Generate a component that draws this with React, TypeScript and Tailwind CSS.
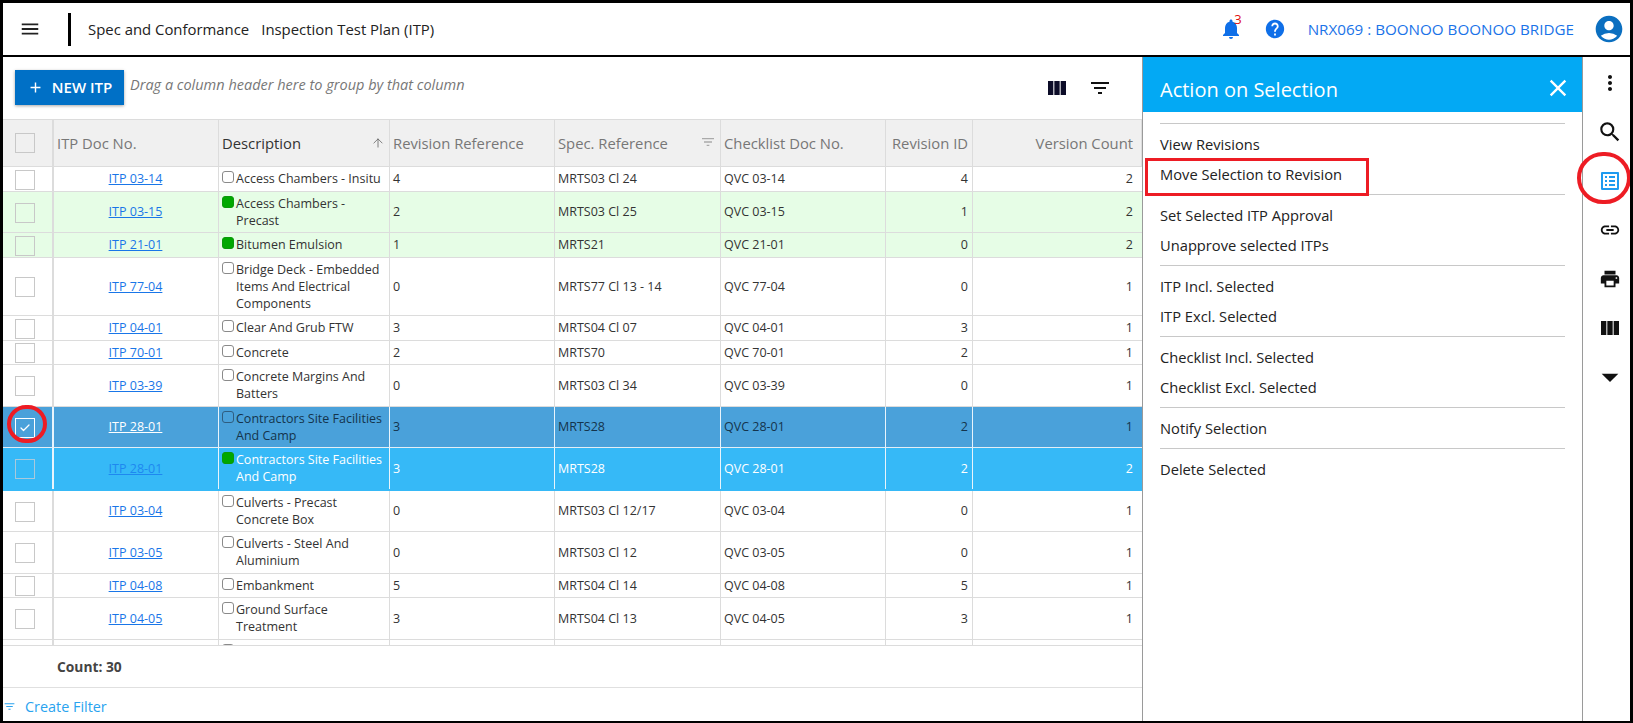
import { ArrowUp, Check } from "lucide-react";
import {
  MdAccountCircle,
  MdAdd,
  MdArrowDropDown,
  MdClose,
  MdFilterList,
  MdHelp,
  MdLink,
  MdListAlt,
  MdMenu,
  MdMoreVert,
  MdNotifications,
  MdPrint,
  MdSearch,
  MdViewColumn,
} from "react-icons/md";

type Row = {
  doc: string;
  desc: string;
  rev: string;
  spec: string;
  checklist: string;
  revId: string;
  versions: string;
  tone?: "green" | "selected" | "active";
  approved?: boolean;
};

const rows: Row[] = [
  { doc: "ITP 03-14", desc: "Access Chambers - Insitu", rev: "4", spec: "MRTS03 Cl 24", checklist: "QVC 03-14", revId: "4", versions: "2" },
  { doc: "ITP 03-15", desc: "Access Chambers - Precast", rev: "2", spec: "MRTS03 Cl 25", checklist: "QVC 03-15", revId: "1", versions: "2", tone: "green", approved: true },
  { doc: "ITP 21-01", desc: "Bitumen Emulsion", rev: "1", spec: "MRTS21", checklist: "QVC 21-01", revId: "0", versions: "2", tone: "green", approved: true },
  { doc: "ITP 77-04", desc: "Bridge Deck - Embedded Items And Electrical Components", rev: "0", spec: "MRTS77 Cl 13 - 14", checklist: "QVC 77-04", revId: "0", versions: "1" },
  { doc: "ITP 04-01", desc: "Clear And Grub FTW", rev: "3", spec: "MRTS04 Cl 07", checklist: "QVC 04-01", revId: "3", versions: "1" },
  { doc: "ITP 70-01", desc: "Concrete", rev: "2", spec: "MRTS70", checklist: "QVC 70-01", revId: "2", versions: "1" },
  { doc: "ITP 03-39", desc: "Concrete Margins And Batters", rev: "0", spec: "MRTS03 Cl 34", checklist: "QVC 03-39", revId: "0", versions: "1" },
  { doc: "ITP 28-01", desc: "Contractors Site Facilities And Camp", rev: "3", spec: "MRTS28", checklist: "QVC 28-01", revId: "2", versions: "1", tone: "selected" },
  { doc: "ITP 28-01", desc: "Contractors Site Facilities And Camp", rev: "3", spec: "MRTS28", checklist: "QVC 28-01", revId: "2", versions: "2", tone: "active", approved: true },
  { doc: "ITP 03-04", desc: "Culverts - Precast Concrete Box", rev: "0", spec: "MRTS03 Cl 12/17", checklist: "QVC 03-04", revId: "0", versions: "1" },
  { doc: "ITP 03-05", desc: "Culverts - Steel And Aluminium", rev: "0", spec: "MRTS03 Cl 12", checklist: "QVC 03-05", revId: "0", versions: "1" },
  { doc: "ITP 04-08", desc: "Embankment", rev: "5", spec: "MRTS04 Cl 14", checklist: "QVC 04-08", revId: "5", versions: "1" },
  { doc: "ITP 04-05", desc: "Ground Surface Treatment", rev: "3", spec: "MRTS04 Cl 13", checklist: "QVC 04-05", revId: "3", versions: "1" },
];

const menuSections = [
  ["View Revisions", "Move Selection to Revision"],
  ["Set Selected ITP Approval", "Unapprove selected ITPs"],
  ["ITP Incl. Selected", "ITP Excl. Selected"],
  ["Checklist Incl. Selected", "Checklist Excl. Selected"],
  ["Notify Selection"],
  ["Delete Selected"],
];

const gridCols = "grid grid-cols-[51px_165px_171px_165px_166px_165px_87px_169px]";

function HeaderCell({ label, right, dark, last, children }: { label: string; right?: boolean; dark?: boolean; last?: boolean; children?: React.ReactNode }) {
  return (
    <div className={`relative flex items-center border-r border-[#dcdcdc] pl-[3px] text-[14.8px] ${last ? "pr-[8px]" : "pr-[4px]"} ${right ? "justify-end" : ""} ${dark ? "font-medium text-[#333]" : "text-[#777]"}`}>
      {label}
      {children}
    </div>
  );
}

function GridRow({ row }: { row: Row }) {
  const bg =
    row.tone === "green"
      ? "bg-[#e6fde6] border-b border-[#dcdcdc]"
      : row.tone === "selected"
        ? "bg-[#4aa1da] border-b border-[#e4eef6]"
        : row.tone === "active"
          ? "bg-[#36b9f7] border-b-2 border-[#36b9f7]"
          : "bg-white border-b border-[#dcdcdc]";
  const line = row.tone === "selected" || row.tone === "active" ? "border-[#e8f4fc]" : "border-[#dcdcdc]";
  const text = row.tone === "active" ? "text-white" : row.tone === "selected" ? "text-[#14344c]" : "text-[#333]";
  const link = row.tone === "selected" ? "text-white" : row.tone === "active" ? "text-[#1e88f0]" : "text-[#1976e8]";
  const cell = `flex items-center border-r pl-[3px] pr-[4px] ${line}`;

  return (
    <div className={`${gridCols} text-[12.5px] leading-[17px] ${bg} ${text}`}>
      <div className={`flex items-center border-r-2 pl-[12px] ${line}`}>
        <div
          className={`mt-[2px] flex h-[20px] w-[20px] items-center justify-center border ${
            row.tone === "selected" ? "border-white" : row.tone === "active" ? "border-[#a9c9dc]" : "border-[#c8c8c8]"
          } ${row.tone ? "" : "bg-white"}`}
        >
          {row.tone === "selected" && <Check className="h-[12px] w-[12px] text-white" strokeWidth={2.5} />}
        </div>
      </div>
      <div className={`${cell} justify-center`}>
        <a href="#" className={`underline ${link}`}>{row.doc}</a>
      </div>
      <div className={`flex items-start border-r pt-[3.25px] pb-[3.25px] pl-[3px] pr-[4px] ${line}`}>
        <span
          className={`mt-[1px] mr-[2px] h-[12px] w-[12px] shrink-0 rounded-[3px] border ${
            row.approved ? "border-[#0a9a0a] bg-[#00a800]" : row.tone === "selected" ? "border-[#2f5d80]" : "border-[#8a8a8a]"
          }`}
        />
        <span>{row.desc}</span>
      </div>
      <div className={cell}>{row.rev}</div>
      <div className={cell}>{row.spec}</div>
      <div className={cell}>{row.checklist}</div>
      <div className={`${cell} justify-end`}>{row.revId}</div>
      <div className="flex items-center justify-end pr-[9px]">{row.versions}</div>
    </div>
  );
}

export default function App() {
  return (
    <div className="relative flex h-[723px] w-[1633px] flex-col overflow-hidden border-x-[3px] border-t-[3px] border-b-[2px] border-black bg-white font-['Open_Sans','Noto_Sans',sans-serif] text-[#333]">
      {/* top bar */}
      <header className="flex h-[54px] shrink-0 items-center border-b-2 border-black">
        <MdMenu className="ml-[16px] h-[22px] w-[22px] text-[#222]" />
        <div className="ml-[27px] h-[33px] w-[3px] bg-black" />
        <div className="ml-[17px] flex gap-[12px] text-[14.9px] text-[#222]">
          <span>Spec and Conformance</span>
          <span>Inspection Test Plan (ITP)</span>
        </div>
        <div className="ml-auto flex items-center text-[#0f6fe8]">
          <div className="relative">
            <MdNotifications className="h-[24px] w-[24px]" />
            <span className="absolute -top-[4px] right-[1px] text-[13px] leading-none text-[#e01010]">3</span>
          </div>
          <MdHelp className="ml-[21px] h-[22px] w-[22px]" />
          <span className="ml-[22px] text-[15.2px] text-[#1a73e8]">NRX069 : BOONOO BOONOO BRIDGE</span>
          <MdAccountCircle className="ml-[19px] mr-[5px] h-[32px] w-[32px] text-[#0b6fc0]" />
        </div>
      </header>

      <div className="flex min-h-0 flex-1">
        {/* grid */}
        <main className="flex w-[1139px] shrink-0 flex-col">
          <div className="flex h-[62px] shrink-0 items-start">
            <button className="mt-[13px] ml-[12px] flex h-[35px] w-[109px] items-center justify-center gap-[8px] bg-[#0070c6] text-[15px] font-semibold text-white shadow-[0_1px_3px_rgba(0,0,0,0.35)]">
              <MdAdd className="h-[17px] w-[17px]" />
              NEW ITP
            </button>
            <span className="mt-[17px] ml-[6px] text-[14.5px] text-[#777] italic">Drag a column header here to group by that column</span>
            <MdViewColumn className="mt-[19px] ml-auto h-[24px] w-[24px] text-[#0c0c28]" />
            <MdFilterList className="mt-[19px] mr-[30px] ml-[19px] h-[24px] w-[24px] text-[#111]" />
          </div>

          <div className="flex h-[527px] shrink-0 flex-col overflow-hidden border-b border-[#dcdcdc]">
            <div className={`${gridCols} h-[48px] shrink-0 border-y border-[#dcdcdc] bg-[#f0f0f0]`}>
              <div className="flex items-center border-r-2 border-[#dcdcdc] pl-[12px]">
                <div className="h-[20px] w-[20px] border border-[#c8c8c8]" />
              </div>
              <HeaderCell label="ITP Doc No." />
              <HeaderCell label="Description" dark>
                <ArrowUp className="absolute top-[16px] right-[4px] h-[14px] w-[14px] text-[#555]" strokeWidth={1.25} />
              </HeaderCell>
              <HeaderCell label="Revision Reference" />
              <HeaderCell label="Spec. Reference">
                <MdFilterList className="absolute top-[14px] right-[4px] h-[16px] w-[16px] text-[#aaa]" />
              </HeaderCell>
              <HeaderCell label="Checklist Doc No." />
              <HeaderCell label="Revision ID" right />
              <HeaderCell label="Version Count" right last />
            </div>
            {rows.map((row, i) => (
              <GridRow key={i} row={row} />
            ))}
            {/* next row, cut off by the footer */}
            <div className={`${gridCols} h-[24px] shrink-0`}>
              <div className="border-r-2 border-[#dcdcdc]" />
              <div className="border-r border-[#dcdcdc]" />
              <div className="border-r border-[#dcdcdc] pt-[4px] pl-[3px]">
                <span className="block h-[12px] w-[12px] rounded-[3px] border border-[#8a8a8a]" />
              </div>
              <div className="border-r border-[#dcdcdc]" />
              <div className="border-r border-[#dcdcdc]" />
              <div className="border-r border-[#dcdcdc]" />
              <div className="border-r border-[#dcdcdc]" />
              <div />
            </div>
          </div>

          <div className="flex h-[42px] shrink-0 items-center border-b border-[#e0e0e0] pt-[1px] pl-[54px] text-[13.8px] font-bold text-[#444]">
            Count: 30
          </div>
          <div className="flex flex-1 items-center gap-[9px] pt-[4px] text-[14.4px] text-[#29a3ef]">
            <MdFilterList className="h-[13px] w-[13px]" />
            Create Filter
          </div>
        </main>

        {/* action panel */}
        <aside className="flex w-[440px] shrink-0 flex-col border-l border-[#9a9a9a]">
          <div className="flex h-[55px] shrink-0 items-center justify-between bg-[#03a9f4] pt-[7px] pr-[10px] pl-[17px] text-white">
            <span className="mt-[3px] text-[20px]">Action on Selection</span>
            <MdClose className="h-[28px] w-[28px]" />
          </div>
          <div className="px-[17px] pt-[11px] text-[14.7px] text-[#222]">
            {menuSections.map((items) => (
              <div key={items[0]} className="border-t border-[#c8c8c8] pt-[5px] pb-[5px]">
                {items.map((item) => (
                  <div key={item} className="flex h-[30px] items-center">
                    {item}
                  </div>
                ))}
              </div>
            ))}
          </div>
        </aside>

        {/* icon rail */}
        <nav className="flex flex-1 flex-col items-center border-l border-[#9a9a9a] pt-[1px] pl-[7px] text-[#111]">
          {[MdMoreVert, MdSearch, MdListAlt, MdLink, MdPrint, MdViewColumn, MdArrowDropDown].map((Icon, i) => (
            <div key={i} className="flex h-[49px] items-center">
              <Icon
                className={
                  i === 6
                    ? "h-[40px] w-[40px]"
                    : i === 2
                      ? "h-[24px] w-[24px] text-[#1e9bf0]"
                      : i === 1
                        ? "h-[26px] w-[26px]"
                        : i === 3 || i === 4
                          ? "h-[22px] w-[22px]"
                          : "h-[24px] w-[24px]"
                }
              />
            </div>
          ))}
        </nav>
      </div>

      {/* red annotations */}
      <div className="absolute top-[402px] left-[4px] h-[38px] w-[40px] rounded-full border-[4px] border-[#ed1c24]" />
      <div className="absolute top-[155px] left-[1142px] h-[38px] w-[224px] border-[3px] border-[#ed1c24]" />
      <div className="absolute top-[149px] left-[1574px] h-[52px] w-[54px] rounded-full border-[4px] border-[#ed1c24]" />
    </div>
  );
}
